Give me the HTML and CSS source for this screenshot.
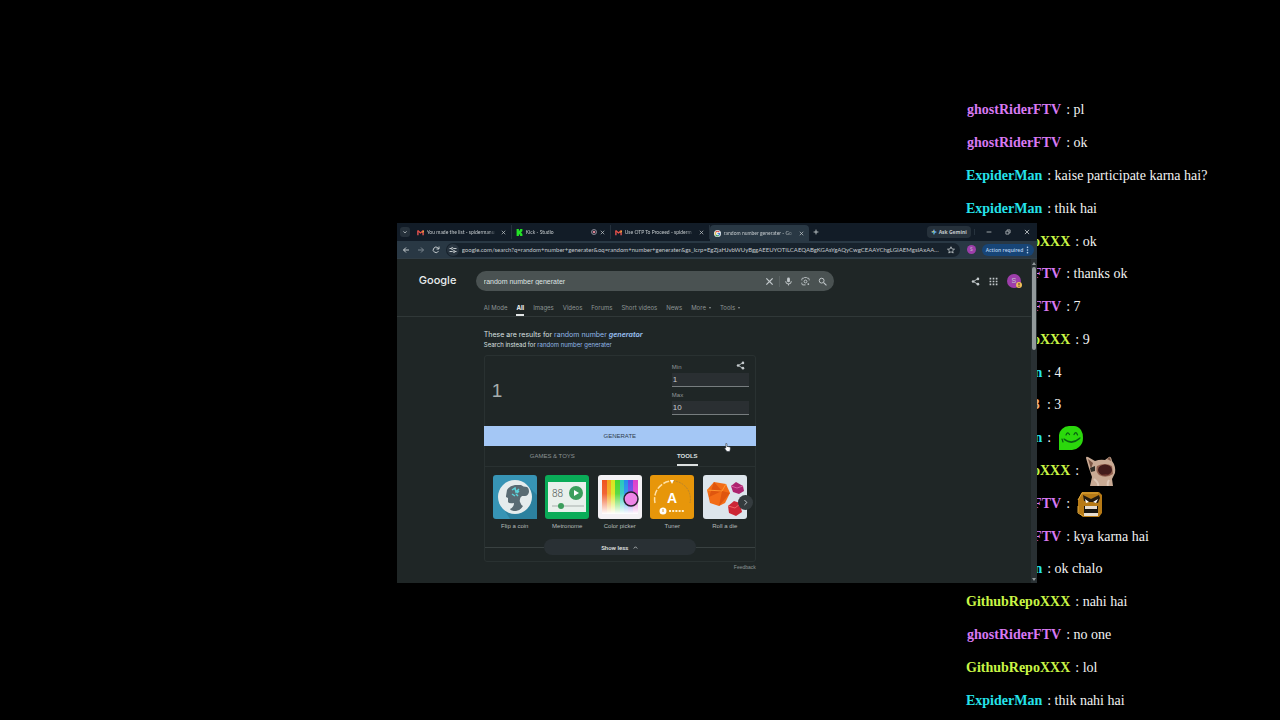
FILE: index.html
```html
<!DOCTYPE html>
<html lang="en">
<head>
  <meta charset="UTF-8" />
  <meta name="viewport" content="width=device-width, initial-scale=1.0"/>
  <title>Stream Overlay</title>
  <link rel="stylesheet" href="styles.css">
</head>
<body>
  <svg class="defs" width="0" height="0">
    <symbol id="close" viewBox="0 0 10 10"><path d="M1.5 1.5l7 7M8.5 1.5l-7 7" fill="none" stroke="currentColor" stroke-width="1.4"/></symbol>
    <symbol id="gmail" viewBox="0 0 16 12"><path d="M0 1v11h4V5z" fill="#b9474b"/><path d="M16 1v11h-4V5z" fill="#b9474b"/><path d="M1.5 1.5L8 7l6.500-5.500" fill="none" stroke="#f05045" stroke-width="3"/><path d="M12 4l4-3v3l-4 3z" fill="#e8b53c"/></symbol>
    <symbol id="share" viewBox="0 0 24 24"><path d="M18 5L6 12l12 7" fill="none" stroke="currentColor" stroke-width="2.4"/><circle cx="18.500" cy="5" r="3.500" fill="currentColor"/><circle cx="5.500" cy="12" r="3.500" fill="currentColor"/><circle cx="18.500" cy="19" r="3.500" fill="currentColor"/></symbol>
  </svg>

  <main class="overlay">
    <ul class="chat">
      <li><b class="violet">ghostRiderFTV</b><span>: pl</span></li>
      <li><b class="violet">ghostRiderFTV</b><span>: ok</span></li>
      <li><b class="cyan">ExpiderMan</b><span>: kaise participate karna hai?</span></li>
      <li><b class="cyan">ExpiderMan</b><span>: thik hai</span></li>
      <li><b class="lime">GithubRepoXXX</b><span>: ok</span></li>
      <li><b class="violet">ghostRiderFTV</b><span>: thanks ok</span></li>
      <li><b class="violet">ghostRiderFTV</b><span>: 7</span></li>
      <li><b class="lime">GithubRepoXXX</b><span>: 9</span></li>
      <li><b class="cyan">ExpiderMan</b><span>: 4</span></li>
      <li><b class="orange">GamerOne3</b><span>: 3</span></li>
      <li><b class="cyan">ExpiderMan</b><span>:</span>
        <svg class="emote" viewBox="0 0 26 26"><path d="M1 25V10q0-3 3-6 3-3 7-3h5q4 0 7 4 2 3 2 8 0 6-4 9-3 3-7 3z" fill="#2bd80c"/><path d="M8 10q1.500-4 3.500-.5M16 9.500q2-4 3.500.5M6 14q8 6 16-1M7 15q7 5 14-1M4 14l1 3" fill="none" stroke="#075d12" stroke-width="1.200" stroke-linecap="round"/></svg>
      </li>
      <li><b class="lime">GithubRepoXXX</b><span>:</span>
        <svg class="emote cat" viewBox="0 0 30 30"><path d="M4 30l2-9Q3 13 0 2q0-2 2-1l7 4q5-2 10-1l4-3q2-1 3 4 4 5 3 12l-3 6 1 7z" fill="#c9aa94"/><path d="M2 3l5 4-2 6zM21 3l3-2 1 4z" fill="#7c5543"/><path d="M4 12l5-2v5l-4 1z" fill="#302c25"/><path d="M11 10q8-4 15 0l1 8q-7 5-14 1-4-4-2-9z" fill="#93614f"/><ellipse cx="19" cy="14" rx="7" ry="5.500" fill="#431c1b"/><path d="M13 17q6 3 12 0-5 4-12 0z" fill="#883c34"/><path d="M8 23q5 4 4 7M23 24q-2 3-1 6" stroke="#ddc7b6" stroke-width="2" fill="none"/></svg>
      </li>
      <li><b class="violet">ghostRiderFTV</b><span>:</span>
        <svg class="emote fist" viewBox="0 0 26 26"><path d="M5 1h17l3 3v18l-3 4H6l-5-5V9z" fill="#b77a16"/><path d="M1 9l4-7h16M1 15v7l5 3" stroke="#e4ab3c" fill="none"/><path d="M6 4l8 4 8-4 1 3-2 5-6-1H12l-5-1z" fill="#231a0e"/><path d="M8 8l4 3-3 1zM16 11l5-3-2 4z" fill="#fff"/><path d="M7 15h14v10H7z" fill="#16130e"/><path d="M8 15h12v3H8zM7 22h14v3H7z" fill="#e7ddd0"/></svg>
      </li>
      <li><b class="violet">ghostRiderFTV</b><span>: kya karna hai</span></li>
      <li><b class="cyan">ExpiderMan</b><span>: ok chalo</span></li>
      <li><b class="lime">GithubRepoXXX</b><span>: nahi hai</span></li>
      <li><b class="violet">ghostRiderFTV</b><span>: no one</span></li>
      <li><b class="lime">GithubRepoXXX</b><span>: lol</span></li>
      <li><b class="cyan">ExpiderMan</b><span>: thik nahi hai</span></li>
    </ul>

    <section class="browser">
      <div class="tab-strip">
        <button class="tab-search" aria-label="Search tabs"><svg viewBox="0 0 10 10"><path d="M2.500 4L5 6.500 7.500 4" fill="none" stroke="currentColor" stroke-width="1.500"/></svg></button>
        <div class="tab">
          <svg class="favicon"><use href="#gmail"/></svg>
          <span class="tab-title">You made the list - spidermanu</span>
          <button class="tab-close" aria-label="Close tab"><svg><use href="#close"/></svg></button>
        </div>
        <div class="tab">
          <svg class="favicon" viewBox="0 0 12 12"><path d="M1 0h4v3h1V2h1V0h4v4h-1v1H9v2h1v1h1v4H7v-2H6V9H5v3H1z" fill="#23e326"/></svg>
          <span class="tab-title">Kick - Studio</span>
          <svg class="recording" viewBox="0 0 12 12"><circle cx="6" cy="6" r="5" fill="none" stroke="#a9aab8" stroke-width="1.500"/><circle cx="6" cy="6" r="2.700" fill="#d68292"/></svg>
          <button class="tab-close" aria-label="Close tab"><svg><use href="#close"/></svg></button>
        </div>
        <div class="tab">
          <svg class="favicon"><use href="#gmail"/></svg>
          <span class="tab-title">Use OTP To Proceed - spiderm</span>
          <button class="tab-close" aria-label="Close tab"><svg><use href="#close"/></svg></button>
        </div>
        <div class="tab active">
          <svg class="favicon" viewBox="0 0 16 16"><circle cx="8" cy="8" r="8" fill="#e9eeee"/><path d="M12 5a5 5 0 0 0-8 0" stroke="#df514b" stroke-width="2.500" fill="none"/><path d="M4 5a5 5 0 0 0 0 6" stroke="#e4b73e" stroke-width="2.500" fill="none"/><path d="M4 11a5 5 0 0 0 7 1" stroke="#42a263" stroke-width="2.500" fill="none"/><path d="M8 8h5q0 3-2 4" stroke="#4784db" stroke-width="2.500" fill="none"/></svg>
          <span class="tab-title">random number generater - Go</span>
          <button class="tab-close" aria-label="Close tab"><svg><use href="#close"/></svg></button>
        </div>
        <button class="new-tab" aria-label="New tab"><svg viewBox="0 0 10 10"><path d="M5 1v8M1 5h8" stroke="currentColor" stroke-width="1.500"/></svg></button>
        <button class="gemini"><svg viewBox="0 0 12 12"><path d="M6 0q.6 5.400 6 6-5.400.6-6 6-.6-5.400-6-6 5.400-.6 6-6" fill="#65a8e8"/><path d="M0 6q4 0 5.500-3.500L6 6z" fill="#dec25b"/><path d="M6 12q0-4-3-5.500L6 6z" fill="#51b06e"/></svg>Ask Gemini</button>
        <div class="window-buttons">
          <button aria-label="Minimize"><svg viewBox="0 0 10 10"><path d="M1 5h8" stroke="currentColor" stroke-width="1.300"/></svg></button>
          <button aria-label="Restore"><svg viewBox="0 0 10 10"><path d="M1.500 3.500h5v5h-5zM3.500 3V1.500h5v5H7" fill="none" stroke="currentColor" stroke-width="1.200"/></svg></button>
          <button aria-label="Close"><svg><use href="#close"/></svg></button>
        </div>
      </div>

      <div class="toolbar">
        <button aria-label="Back"><svg viewBox="0 0 16 16"><path d="M14 8H3M8 3L3 8l5 5" fill="none" stroke="currentColor" stroke-width="2"/></svg></button>
        <button class="dim" aria-label="Forward"><svg viewBox="0 0 16 16"><path d="M2 8h11M8 3l5 5-5 5" fill="none" stroke="currentColor" stroke-width="2"/></svg></button>
        <button aria-label="Reload"><svg viewBox="0 0 16 16"><path d="M13 10a5.500 5.500 0 1 1-1-6l2 2M14 1v5H9" fill="none" stroke="currentColor" stroke-width="2"/></svg></button>
        <div class="address">
          <span class="site-info"><svg viewBox="0 0 16 16"><path d="M1 5h4M9 5h6M1 11h6M11 11h4" stroke="currentColor" stroke-width="2"/><circle cx="6.500" cy="5" r="2" fill="none" stroke="currentColor" stroke-width="1.800"/><circle cx="10" cy="11" r="2" fill="none" stroke="currentColor" stroke-width="1.800"/></svg></span>
          <input type="text" aria-label="Address" value="google.com/search?q=random+number+generater&amp;oq=random+number+generater&amp;gs_lcrp=EgZjaHJvbWUyBggAEEUYOTILCAEQABgKGAsYgAQyCwgCEAAYChgLGIAEMgsIAxAAGAoY...">
          <svg class="star" viewBox="0 0 16 16"><path d="M8 1.500l2 4.500 5 .4-3.800 3.200L12.400 14 8 11.500 3.600 14l1.200-4.400L1 6.400 6 6z" fill="none" stroke="currentColor" stroke-width="1.600"/></svg>
        </div>
        <span class="profile">S</span>
        <button class="action">Action required <svg viewBox="0 0 4 12"><circle cx="2" cy="2" r="1.200"/><circle cx="2" cy="6" r="1.200"/><circle cx="2" cy="10" r="1.200"/></svg></button>
      </div>

      <div class="page">
        <div class="content">
          <header class="header">
            <a class="logo" href="#">Google</a>
            <form class="search">
              <input type="text" aria-label="Search" value="random number generater">
              <button type="button" aria-label="Clear"><svg><use href="#close"/></svg></button>
              <i class="split"></i>
              <button type="button" aria-label="Voice search"><svg viewBox="0 0 16 16"><rect x="5.500" y="1" width="5" height="8.500" rx="2.500" fill="currentColor"/><path d="M3 7.500a5 5 0 0 0 10 0M8 12v3" fill="none" stroke="currentColor" stroke-width="1.700"/></svg></button>
              <button type="button" aria-label="Image search"><svg viewBox="0 0 16 16"><path d="M1.500 6V4q0-2 2-2H5l1-1h4l1 1h1.500q2 0 2 2v2M1.500 10v2q0 2 2 2H8" fill="none" stroke="currentColor" stroke-width="1.600"/><circle cx="8" cy="8" r="2.500" fill="none" stroke="currentColor" stroke-width="1.600"/><circle cx="13" cy="12.500" r="1.600" fill="currentColor"/></svg></button>
              <button type="button" aria-label="Search"><svg viewBox="0 0 16 16"><circle cx="6.500" cy="6.500" r="4.300" fill="none" stroke="currentColor" stroke-width="1.700"/><path d="M10 10l5 5" stroke="currentColor" stroke-width="1.900"/></svg></button>
            </form>
            <div class="account">
              <button aria-label="Share"><svg><use href="#share"/></svg></button>
              <button aria-label="Apps"><svg viewBox="0 0 16 16"><path d="M1 3h3m2.500 0h3M12 3h3M1 8h3m2.500 0h3M12 8h3M1 13h3m2.500 0h3m2.500 0h3" stroke="currentColor" stroke-width="3"/></svg></button>
              <span class="avatar">S<svg class="alert" viewBox="0 0 14 14"><circle cx="7" cy="7" r="7" fill="#efbd58"/><path d="M7 2.500v5.500M7 9.500v2" stroke="#332518" stroke-width="2"/></svg></span>
            </div>
          </header>

          <nav class="filters">
            <a href="#">AI Mode</a>
            <a href="#" class="selected">All</a>
            <a href="#">Images</a>
            <a href="#">Videos</a>
            <a href="#">Forums</a>
            <a href="#">Short videos</a>
            <a href="#">News</a>
            <a href="#" class="more">More</a>
            <a href="#" class="more">Tools</a>
          </nav>

          <div class="results">
            <p class="corrected">These are results for <a href="#">random number <b>generator</b></a></p>
            <p class="instead">Search instead for <a href="#">random number generater</a></p>

            <div class="card">
              <div class="generator">
                <output class="number">1</output>
                <div class="range">
                  <label for="min">Min</label>
                  <input type="text" id="min" value="1">
                  <label for="max">Max</label>
                  <input type="text" id="max" value="10">
                </div>
                <button class="share" aria-label="Share"><svg><use href="#share"/></svg></button>
              </div>
              <button class="generate">GENERATE
                <svg class="pointer" viewBox="0 0 12 16"><path d="M3 1q2-1 2 1v4l5 1q2 1 1 4l-1 4H5L1 10q0-2 2-1z" fill="#fff" stroke="#28303a"/></svg>
              </button>
              <div class="categories">
                <button>GAMES &amp; TOYS</button>
                <button class="selected">TOOLS</button>
              </div>
              <div class="tiles">
                <a class="tile" href="#">
                  <svg viewBox="0 0 44 44"><rect width="44" height="44" rx="3" fill="#3794b5"/><path d="M36 12l8 8v24H17L12 36z" fill="#2c819f"/><circle cx="22" cy="22" r="17" fill="#e5eced"/><path d="M13 21l1-6q2-4 8-5h6q2 2 6 2 2 1 2 5-1 4-4 4h-3q-3 2-2 6 1 3 3 4-3 5-7 5-5 0-6-2 4-2 4-6-5 1-6-1v-4l-2-1z" fill="#596b73"/><path d="M19 15l3-2 1 4 3-3M19 19l3 2M23 19l2 2M26 16l-2 2" stroke="#5bd3da" stroke-width="1.500" fill="none"/></svg>
                  <span>Flip a coin</span>
                </a>
                <a class="tile" href="#">
                  <svg viewBox="0 0 44 44"><rect width="44" height="44" rx="3" fill="#0aac58"/><path d="M3 7h38v30H3z" fill="#e9f0ec"/><text x="7" y="22" class="beats">88</text><circle cx="31" cy="18" r="7" fill="#3b9e5c"/><path d="M29 15l5 3-5 3z" fill="#fff"/><path d="M7 31h32" stroke="#a7afac"/><circle cx="16" cy="31" r="3" fill="#3b9e5c"/></svg>
                  <span>Metronome</span>
                </a>
                <a class="tile" href="#">
                  <svg viewBox="0 0 44 44">
                    <defs><linearGradient id="shade" x2="0" y2="1"><stop stop-color="#fff" stop-opacity="0"/><stop offset=".4" stop-color="#fff" stop-opacity=".1"/><stop offset="1" stop-color="#fff"/></linearGradient></defs>
                    <rect width="44" height="44" rx="3" fill="#f4f2f5"/><path d="M4 5h5v34H4z" fill="#ef5520"/><path d="M9 5h4v34H9z" fill="#f3a51c"/><path d="M13 5h4v34h-4z" fill="#d9e51d"/><path d="M17 5h5v34h-5z" fill="#4bd630"/><path d="M22 5h4v34h-4z" fill="#29c7bc"/><path d="M26 5h4v34h-4z" fill="#258dec"/><path d="M30 5h5v34h-5z" fill="#6649e8"/><path d="M35 5h5v34h-5z" fill="#dd3fcb"/><path d="M4 5h36v34H4z" fill="url(#shade)"/><circle cx="33" cy="24" r="7" fill="#ed85e7" stroke="#272130" stroke-width="1.500"/></svg>
                  <span>Color picker</span>
                </a>
                <a class="tile" href="#">
                  <svg viewBox="0 0 44 44"><rect width="44" height="44" rx="3" fill="#e7960a"/><path d="M5 28a18 18 0 0 1 17-22" fill="none" stroke="#ffe0a4" stroke-width="1.500" stroke-dasharray="6 1.500"/><path d="M23 6a18 18 0 0 1 17 22" fill="none" stroke="#b7852e" stroke-dasharray="2 1"/><path d="M20 5h4l-2 4z" fill="#fff"/><text x="22" y="28" class="note">A</text><circle cx="13" cy="36" r="3.500" fill="#fff"/><path d="M13 34v3" stroke="#d69225"/><path d="M19 36h16" stroke="#ffeec8" stroke-width="2" stroke-dasharray="2 1.200"/></svg>
                  <span>Tuner</span>
                </a>
                <a class="tile" href="#">
                  <svg viewBox="0 0 44 44"><rect width="44" height="44" rx="3" fill="#dce5ec"/><path d="M4 15l7-8 12 2 4 9-5 10-6 3-9-3z" fill="#f26c16"/><path d="M11 7l8 9-13 6zM19 16l8 2-11 13z" fill="#df560f"/><path d="M4 15l15 1 4-7" fill="none" stroke="#ff962f"/><path d="M28 11l5-4 7 4 1 5-5 3-6-2z" fill="#ad246f"/><path d="M28 11l6 2 6-2" stroke="#da5ca0" fill="none"/><path d="M25 31l6-5 6 2 2 9-6 4-7-3z" fill="#cc2635"/><path d="M25 31l7 2 5-4" stroke="#ef6464" fill="none"/></svg>
                  <span>Roll a die</span>
                </a>
                <button class="next" aria-label="Next"><svg viewBox="0 0 10 10"><path d="M3.500 1.500L7 5 3.500 8.500" fill="none" stroke="currentColor" stroke-width="1.400"/></svg></button>
              </div>
              <div class="less">
                <button>Show less <svg viewBox="0 0 10 10"><path d="M1.500 7L5 3.500 8.500 7" fill="none" stroke="currentColor" stroke-width="1.400"/></svg></button>
              </div>
            </div>
            <a class="feedback" href="#">Feedback</a>
          </div>
        </div>
        <div class="scrollbar"><span class="up"></span><i></i><span class="down"></span></div>
      </div>
    </section>
  </main>
</body>
</html>
```

FILE: styles.css
```css
* {
  box-sizing: border-box;
}
body {
  margin: 0;
  background: #000;
  font-family: "Liberation Sans", Arial, sans-serif;
}
button, input {
  border: none;
  padding: 0;
  margin: 0;
  background: none;
  color: inherit;
  font: inherit;
  outline: none;
}
button {
  cursor: pointer;
}
a {
  color: inherit;
  text-decoration: none;
}
svg {
  display: block;
  flex: none;
}
.defs {
  position: absolute;
}
.overlay {
  position: relative;
  height: 100vh;
  overflow: hidden;
  display: flex;
  justify-content: flex-end;
}

/* chat */
.chat {
  list-style: none;
  margin: 0;
  padding: 94px 0 3px;
  width: 314px;
  display: grid;
  grid-auto-rows: minmax(0, 1fr);
  font-family: "Liberation Serif", "Times New Roman", serif;
  font-size: 14px;
  color: #f2f2f2;
}
.chat li {
  display: flex;
  align-items: center;
  white-space: nowrap;
}
.chat b {
  margin-right: 5px;
}
.violet {
  color: #d879f2;
  padding-left: 1px;
}
.cyan {
  color: #25e3ea;
}
.lime {
  color: #c9f545;
}
.orange {
  color: #f2b07c;
  padding-right: 2px;
}
.emote {
  width: 26px;
  height: 26px;
  margin-left: 7px;
}
.emote.cat {
  width: 30px;
  height: 30px;
}

/* browser window */
.browser {
  position: absolute;
  left: 31%;
  top: 31%;
  width: 50%;
  height: 50%;
  display: flex;
  flex-direction: column;
  overflow: hidden;
  background: #1f2626;
  color: #c3c9cc;
  font-size: 6px;
}
.tab-strip {
  display: flex;
  align-items: center;
  height: 18px;
  flex: none;
  background: #121c27;
  font-family: "Open Sans", sans-serif;
  font-size: 5px;
}
.tab-strip svg {
  width: 6px;
  height: 6px;
}
.tab-search {
  width: 10px;
  height: 10px;
  margin: 0 3px;
  padding: 2px;
  border-radius: 3px;
  background: #26313b;
}
.tab {
  display: flex;
  align-items: center;
  gap: 3px;
  width: 99px;
  height: 14px;
  padding: 0 5px 0 4px;
  border-right: 1px solid #26323d;
}
.tab.active {
  height: 16px;
  align-self: flex-end;
  background: #293844;
  border: none;
  border-radius: 4px 4px 0 0;
}
.tab .favicon {
  width: 7px;
  height: 7px;
}
.tab-title {
  flex: 1;
  overflow: hidden;
  white-space: nowrap;
  font-family: Lato, sans-serif;
  mask-image: linear-gradient(to right, #000 85%, transparent);
}
.tab-strip .tab-close svg {
  width: 5px;
  height: 5px;
}
.new-tab {
  margin-left: 4px;
}
.gemini {
  display: flex;
  align-items: center;
  gap: 2px;
  height: 12px;
  margin-left: auto;
  padding: 0 4px;
  border-radius: 4px;
  background: #26313b;
  font-weight: bold;
}
.window-buttons {
  display: flex;
  gap: 13px;
  margin-left: 3px;
  padding: 0 7px 0 11px;
  border-left: 1px solid #26323d;
}
.toolbar {
  display: flex;
  align-items: center;
  gap: 7px;
  height: 18px;
  flex: none;
  padding: 0 3px 0 5px;
  background: #293844;
  border-bottom: 1px solid #303d46;
  font-family: "Open Sans", sans-serif;
}
.toolbar svg {
  width: 8px;
  height: 8px;
}
.dim {
  color: #7a858e;
}
.address {
  flex: 1;
  display: flex;
  align-items: center;
  gap: 3px;
  height: 14px;
  padding: 0 5px 0 1px;
  margin-left: -1px;
  border-radius: 7px;
  background: #17222c;
}
.address input {
  flex: 1;
  min-width: 0;
  font-family: Lato, sans-serif;
  text-overflow: ellipsis;
}
.address .star {
  margin-left: 4px;
}
.site-info {
  padding: 2px;
  border-radius: 50%;
  background: #293540;
}
.profile {
  width: 9px;
  height: 9px;
  border-radius: 50%;
  background: #9d3eaa;
  font-size: 5px;
  line-height: 9px;
  text-align: center;
}
.action {
  display: flex;
  align-items: center;
  justify-content: space-between;
  width: 52px;
  height: 12px;
  margin-left: -1px;
  padding: 0 5px 0 4px;
  border-radius: 6px;
  background: #174577;
  color: #b8d3f0;
  font-size: 5px;
  font-weight: 600;
  white-space: nowrap;
}
.action svg {
  width: 3px;
  fill: currentColor;
}

/* search page */
.page {
  flex: 1;
  display: flex;
  min-height: 0;
}
.content {
  flex: 1;
  min-width: 0;
}
.header {
  display: flex;
  align-items: center;
  padding: 12px 10px 0 22px;
}
.logo {
  width: 57px;
  padding-bottom: 2px;
  font-family: Inter, sans-serif;
  font-size: 11px;
  font-weight: 500;
  color: #e9eded;
}
.search {
  display: flex;
  align-items: center;
  gap: 8px;
  width: 358px;
  height: 20px;
  padding: 0 7px 0 8px;
  border-radius: 10px;
  background: #4a5252;
}
.search input {
  flex: 1;
  min-width: 0;
  font-size: 7px;
  color: #dfe3e3;
}
.search svg, .account svg {
  width: 9px;
  height: 9px;
}
.split {
  width: 1px;
  height: 11px;
  margin: 0 -4px 0 -3px;
  background: #5a6262;
}
.account {
  display: flex;
  align-items: center;
  gap: 9px;
  margin-left: auto;
}
.avatar {
  position: relative;
  width: 14px;
  height: 14px;
  border-radius: 50%;
  background: #9d3eaa;
  font-size: 7px;
  line-height: 14px;
  text-align: center;
}
.avatar .alert {
  position: absolute;
  right: -1px;
  bottom: 0;
  width: 6px;
  height: 6px;
}
.filters {
  display: flex;
  gap: 9px;
  height: 26px;
  padding-left: 87px;
  border-bottom: 1px solid #303838;
  color: #8d9595;
  font-family: Inter, sans-serif;
  line-height: 33px;
  white-space: nowrap;
}
.filters .selected {
  color: #f1f3f3;
  font-weight: bold;
  border-bottom: 2px solid #e1e5e5;
}
.more::after {
  content: "";
  display: inline-block;
  margin: 0 0 1px 3px;
  border: 1px solid transparent;
  border-top: 2px solid #8d9595;
  border-bottom: none;
}
.results {
  display: flex;
  flex-direction: column;
  width: 272px;
  margin-left: 87px;
  padding-top: 12px;
}
.results p {
  margin: 0;
  color: #dce0e0;
  font-family: Inter, sans-serif;
}
.results p a {
  color: #91b8e8;
}
.results .corrected {
  font-size: 7px;
  line-height: 11px;
}
.corrected b {
  font-style: italic;
}
.instead {
  line-height: 9px;
}
.card {
  margin-top: 6px;
  border: 1px solid #293131;
  border-radius: 3px;
}
.generator {
  position: relative;
  display: flex;
  align-items: center;
  justify-content: space-between;
  height: 70px;
  padding: 0 6px 0 7px;
}
.number {
  font-size: 19px;
  color: #a6adad;
}
.range {
  display: flex;
  flex-direction: column;
  width: 77px;
  color: #929999;
}
.range label {
  line-height: 9px;
}
.range input {
  height: 14px;
  margin: 1px 0 4px;
  padding-left: 1px;
  border-bottom: 1px solid #777d7f;
  background: #2a2f32;
  color: #c8cccc;
  font-size: 8px;
}
.generator .share {
  position: absolute;
  right: 10px;
  top: 5px;
}
.share svg {
  width: 9px;
  height: 9px;
}
.generate {
  position: relative;
  display: block;
  width: calc(100% + 2px);
  height: 20px;
  margin: 0 -1px;
  background: #a4c7f5;
  color: #303c4c;
}
.pointer {
  position: absolute;
  right: 25px;
  bottom: -6px;
  width: 7px;
  height: 9px;
}
.categories {
  display: grid;
  grid-template-columns: 1fr 1fr;
  justify-items: center;
  height: 21px;
  border-bottom: 1px solid #293131;
  color: #8d9595;
}
.categories .selected {
  color: #dce0e0;
  font-weight: bold;
  padding-top: 2px;
  border-bottom: 2px solid #dce0e0;
}
.tiles {
  position: relative;
  display: flex;
  justify-content: space-between;
  padding: 8px 8px 5px;
}
.tile {
  width: 44px;
  color: #b5bbbb;
  line-height: 15px;
  text-align: center;
  white-space: nowrap;
}
.tile svg {
  width: 44px;
  height: 44px;
}
.beats {
  font-family: Roboto, sans-serif;
  font-size: 10px;
  font-weight: 300;
  fill: #505856;
}
.note {
  font-size: 14px;
  font-weight: bold;
  fill: #fff;
  text-anchor: middle;
}
.next {
  position: absolute;
  right: 2px;
  top: 28px;
  width: 15px;
  height: 15px;
  padding: 4px;
  border-radius: 50%;
  background: #343b3e;
}
.next svg {
  width: 7px;
  height: 7px;
}
.less {
  display: flex;
  align-items: center;
  margin-bottom: 6px;
}
.less::before, .less::after {
  content: "";
  flex: 1;
  height: 1px;
  background: #394141;
}
.less button {
  display: flex;
  align-items: center;
  justify-content: center;
  gap: 5px;
  width: 152px;
  height: 16px;
  border-radius: 8px;
  background: #293034;
  color: #e1e5e5;
  font-family: Roboto, sans-serif;
  font-weight: 500;
}
.less svg {
  width: 5px;
  height: 5px;
}
.feedback {
  align-self: flex-end;
  color: #8d9595;
  font-size: 5px;
  line-height: 10px;
}
.scrollbar {
  display: flex;
  flex-direction: column;
  align-items: center;
  width: 6px;
  padding: 3px 0 2px;
  background: #293033;
}
.scrollbar i {
  width: 4px;
  height: 83px;
  margin: 2px 0 auto;
  border-radius: 2px;
  background: #92999b;
}
.up, .down {
  border: 2px solid transparent;
}
.up {
  border-top: none;
  border-bottom: 3px solid #92999b;
}
.down {
  border-bottom: none;
  border-top: 3px solid #92999b;
}
```
